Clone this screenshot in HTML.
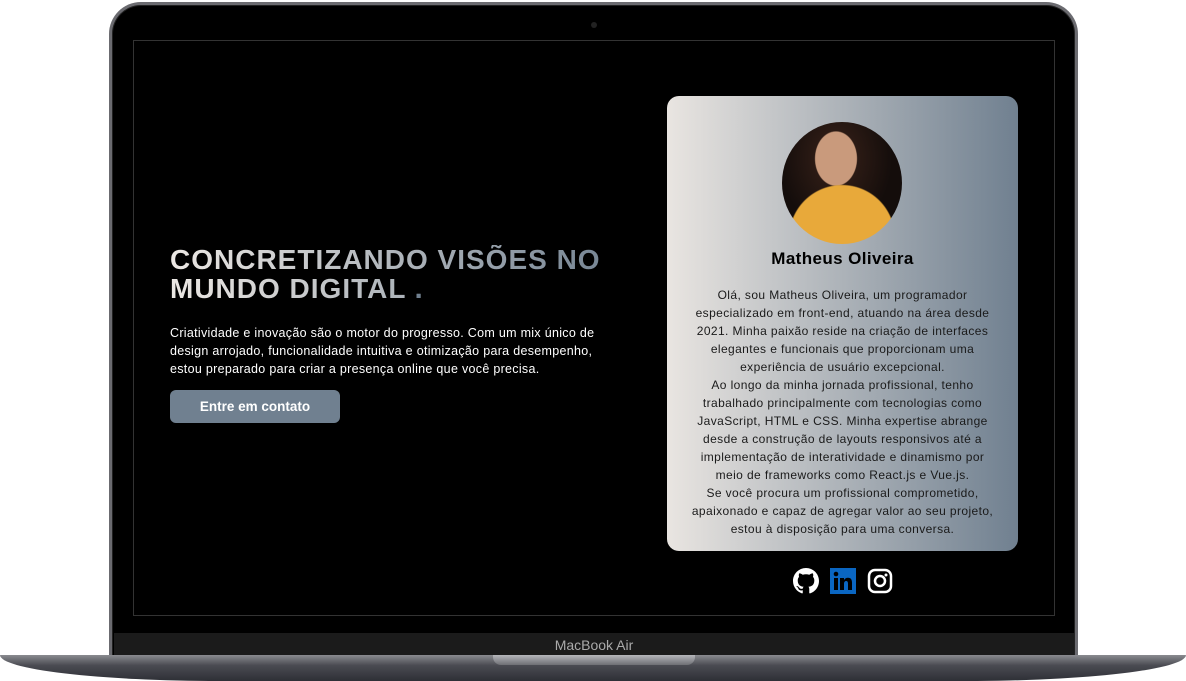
<!DOCTYPE html>
<html><head><meta charset="utf-8"><style>
*{margin:0;padding:0;box-sizing:border-box}
body{width:1186px;height:681px;background:#fff;position:relative;overflow:hidden;font-family:"Liberation Sans",sans-serif}
.lid{position:absolute;left:109px;top:2px;width:969px;height:662px;border-radius:32px 32px 0 0;background:#000;border:3px solid #6b6b70;border-bottom:none;box-shadow:inset 0 0 0 1px #222}
.cam{position:absolute;left:591px;top:22px;width:6px;height:6px;border-radius:50%;background:#222}
.screen{position:absolute;left:133px;top:40px;width:922px;height:576px;border:1px solid #333;background:#000}
.bezel{position:absolute;left:114px;top:633px;width:960px;height:24px;background:#1b1b1b;color:#aaa;font-size:14px;text-align:center;line-height:24px}
.base{position:absolute;left:0;top:655px;width:1186px;height:26px;background:linear-gradient(#8a8b90,#4a4b52 40%,#2e2f36);border-radius:0 0 220px 220px/0 0 26px 26px}
.notch{position:absolute;left:493px;top:655px;width:202px;height:10px;background:linear-gradient(#b5b6ba,#6e6f74);border-radius:0 0 8px 8px}
h1{position:absolute;left:170px;top:245px;font-size:28px;line-height:29px;font-weight:bold;background:linear-gradient(90deg,#ece8e4,#708090 100%);-webkit-background-clip:text;background-clip:text;color:transparent;width:460px;letter-spacing:1px;white-space:nowrap}
.p{position:absolute;left:170px;top:324px;font-size:12.5px;line-height:18px;color:#fff;white-space:nowrap;letter-spacing:0.3px}
.btn{position:absolute;left:170px;top:390px;width:170px;height:33px;border-radius:6px;background:#708090;color:#fff;font-weight:bold;font-size:13.5px;text-align:center;line-height:33px}
.card{position:absolute;left:667px;top:96px;width:351px;height:455px;border-radius:12px;background:linear-gradient(90deg,#e9e5e1,#708090)}
.photo{position:absolute;left:782px;top:122px;width:120px;height:122px;border-radius:50%;background:radial-gradient(circle at 50% 95%,#e8a93a 0 40%,transparent 41%),radial-gradient(ellipse at 45% 30%,#c99a7c 0 22%,#2b1a14 23%,#140d0b 60%);overflow:hidden}
.name{position:absolute;left:667px;top:249px;width:351px;text-align:center;font-size:17px;font-weight:bold;color:#000;letter-spacing:0.4px}
.bio{position:absolute;left:667px;top:286px;width:351px;text-align:center;font-size:12px;line-height:18px;color:#1a1a1a;white-space:nowrap;letter-spacing:0.4px}
.icons{position:absolute;top:568px;left:793px;display:flex;gap:11px}
</style></head><body>
<div class="lid"></div>
<div class="cam"></div>
<div class="screen"></div>
<div class="bezel">MacBook Air</div>
<div class="base"></div>
<div class="notch"></div>
<h1>CONCRETIZANDO VISÕES NO<br>MUNDO DIGITAL <span style="color:#708090;-webkit-text-fill-color:#708090">.</span></h1>
<div class="p">Criatividade e inovação são o motor do progresso. Com um mix único de<br>design arrojado, funcionalidade intuitiva e otimização para desempenho,<br>estou preparado para criar a presença online que você precisa.</div>
<div class="btn">Entre em contato</div>
<div class="card"></div>
<div class="photo"></div>
<div class="name">Matheus Oliveira</div>
<div class="bio">Olá, sou Matheus Oliveira, um programador<br>especializado em front-end, atuando na área desde<br>2021. Minha paixão reside na criação de interfaces<br>elegantes e funcionais que proporcionam uma<br>experiência de usuário excepcional.<br>Ao longo da minha jornada profissional, tenho<br>trabalhado principalmente com tecnologias como<br>JavaScript, HTML e CSS. Minha expertise abrange<br>desde a construção de layouts responsivos até a<br>implementação de interatividade e dinamismo por<br>meio de frameworks como React.js e Vue.js.<br>Se você procura um profissional comprometido,<br>apaixonado e capaz de agregar valor ao seu projeto,<br>estou à disposição para uma conversa.</div>
<div class="icons">
<svg width="26" height="26" viewBox="0 0 16 16"><path fill="#fff" d="M8 0C3.580 0 0 3.58 0 8c0 3.54 2.29 6.53 5.47 7.59.4.07.55-.17.55-.38 0-.19-.01-.82-.01-1.49-2.01.37-2.53-.49-2.69-.94-.09-.23-.48-.94-.82-1.13-.28-.15-.68-.52-.01-.53.63-.01 1.08.58 1.23.82.72 1.21 1.87.87 2.33.66.07-.52.28-.87.51-1.07-1.78-.2-3.64-.89-3.64-3.95 0-.87.31-1.59.82-2.15-.08-.2-.36-1.02.08-2.12 0 0 .67-.21 2.2.82.64-.18 1.32-.27 2-.27.68 0 1.36.09 2 .27 1.53-1.04 2.2-.82 2.2-.82.44 1.1.16 1.92.08 2.12.51.56.82 1.27.82 2.15 0 3.07-1.87 3.75-3.65 3.95.29.25.54.73.54 1.48 0 1.07-.01 1.93-.01 2.2 0 .21.15.46.55.38A8.013 8.013 0 0016 8c0-4.42-3.58-8-8-8z"/></svg>
<svg width="26" height="26" viewBox="0 0 26 26"><rect width="26" height="26" fill="#0a66c2"/><rect x="4" y="10" width="4" height="12" fill="#000"/><circle cx="6" cy="6" r="2.3" fill="#000"/><path fill="#000" d="M10 10h4v2c.8-1.4 2.2-2.3 4-2.3 3 0 4 2 4 5V22h-4v-6.5c0-1.5-.5-2.5-1.8-2.5-1.4 0-2.2 1-2.2 2.6V22h-4z"/></svg>
<svg width="26" height="26" viewBox="0 0 26 26"><rect x="2" y="2" width="22" height="22" rx="6" fill="none" stroke="#fff" stroke-width="2.5"/><circle cx="13" cy="13" r="5" fill="none" stroke="#fff" stroke-width="2.5"/><circle cx="19" cy="7" r="1.5" fill="#fff"/></svg>
</div>
</body></html>
